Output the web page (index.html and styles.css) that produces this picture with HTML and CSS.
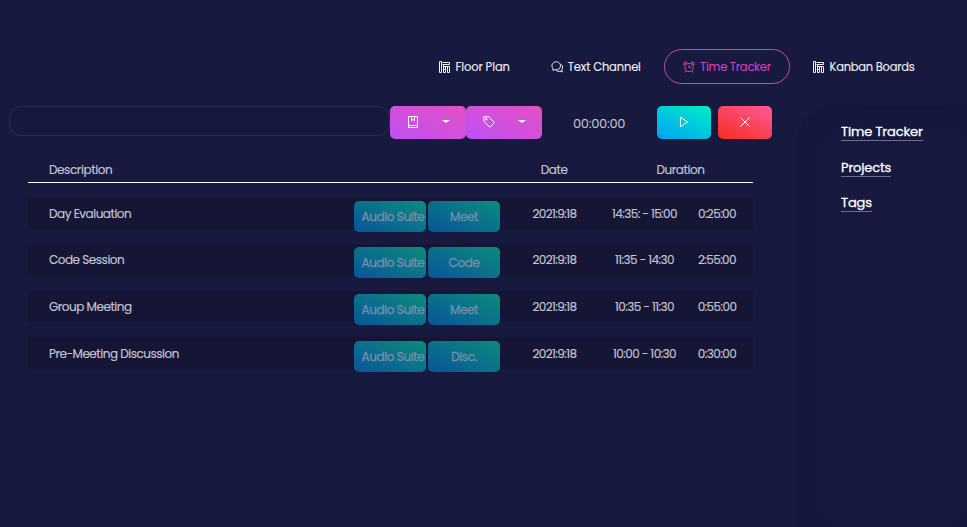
FILE: index.html
```html
<!DOCTYPE html>
<html lang="en">
<head>
<meta charset="utf-8">
<title>Time Tracker</title>
<link rel="stylesheet" href="styles.css">
</head>
<body>
<svg class="defs" aria-hidden="true">
  <symbol id="board" viewBox="0 0 12 12"><path d="M1.500 .500H3.500V11.500H1.500ZM4.500 1.500H11.500V3.500H4.500M5.500 4V11.500M6 5.500H11.500V11.500H9.500V5.500M7.500 5.500V8.500M5.500 8.500H7.500V11.500H5.500"/></symbol>
  <symbol id="chat" viewBox="0 0 12 12"><path d="M1.800 9.200 2 7.400C.3 5.500 .6 2.500 3.500 1.200C6.500 0 9.500 1.800 9.500 4.800C9.500 7.500 7 9 4.800 8.800ZM10 3.300C12 4.600 12 7 10.800 8.600L11.200 10.800 9 10.200C7.500 10.600 6 10.300 5.200 9.300"/></symbol>
  <symbol id="clock" viewBox="0 0 12 12"><circle cx="6" cy="6.500" r="4.100"/><path d="M6 4V6.700H8M3 10 1.500 11.500M9 10 10.500 11.500M.9 4C0 1.500 2 .2 4 1.300ZM11.100 4C12 1.500 10 .2 8 1.300Z"/></symbol>
  <symbol id="book" viewBox="0 0 12 12"><path d="M1.500 .500H10.500V11.500H1.500ZM1.500 9.500H10.500M4.500 .500V4.500L6 3.500 7.500 4.500V.500"/></symbol>
  <symbol id="tag" viewBox="0 0 12 12"><path d="M.8 .8H5.800L11.400 6.600 7 11.200 .8 5.300Z"/><circle cx="3.300" cy="3.200" r=".8"/></symbol>
  <symbol id="play" viewBox="0 0 12 12"><path d="M2.500 1.300V10.700L9.500 6Z"/></symbol>
  <symbol id="close" viewBox="0 0 12 12"><path d="M1.500 1.500 10.500 10.500M10.500 1.500 1.500 10.500"/></symbol>
</svg>
<nav class="nav">
  <a class="tab floor"><svg><use href="#board"/></svg><span>Floor Plan</span></a>
  <a class="tab text"><svg><use href="#chat"/></svg><span>Text Channel</span></a>
  <a class="tab active"><svg><use href="#clock"/></svg><span>Time Tracker</span></a>
  <a class="tab kanban"><svg><use href="#board"/></svg><span>Kanban Boards</span></a>
</nav>
<div class="layout">
  <main class="main">
    <div class="toolbar">
      <input class="entry" type="text" aria-label="Description">
      <button class="pick"><svg><use href="#book"/></svg><i class="caret"></i></button>
      <button class="pick"><svg><use href="#tag"/></svg><i class="caret"></i></button>
      <span class="timer">00:00:00</span>
      <button class="action start"><svg><use href="#play"/></svg></button>
      <button class="action stop"><svg><use href="#close"/></svg></button>
    </div>
    <div class="table">
      <div class="head"><span class="desc">Description</span><span class="date">Date</span><span class="dur">Duration</span></div>
      <div class="row"><span class="desc">Day Evaluation</span><span class="chip suite">Audio Suite</span><span class="chip">Meet</span><span class="date">2021:9:18</span><span class="range">14:35: - 15:00</span><span class="total">0:25:00</span></div>
      <div class="row"><span class="desc">Code Session</span><span class="chip suite">Audio Suite</span><span class="chip">Code</span><span class="date">2021:9:18</span><span class="range">11:35 - 14:30</span><span class="total">2:55:00</span></div>
      <div class="row"><span class="desc">Group Meeting</span><span class="chip suite">Audio Suite</span><span class="chip">Meet</span><span class="date">2021:9:18</span><span class="range">10:35 - 11:30</span><span class="total">0:55:00</span></div>
      <div class="row"><span class="desc">Pre-Meeting Discussion</span><span class="chip suite">Audio Suite</span><span class="chip">Disc.</span><span class="date">2021:9:18</span><span class="range">10:00 - 10:30</span><span class="total">0:30:00</span></div>
    </div>
  </main>
  <aside class="side">
    <a class="link">Time Tracker</a>
    <a class="link">Projects</a>
    <a class="link">Tags</a>
  </aside>
</div>
</body>
</html>
```
FILE: styles.css
```css
* { box-sizing: border-box; }
body {
  margin: 0;
  height: 527px;
  overflow: hidden;
  background: #17193f;
  color: #c5c5d3;
  font: 12px/18px Poppins, Inter, sans-serif;
  letter-spacing: -0.48px;
}
.defs { display: none; }
svg { width: 12px; height: 12px; flex: none; fill: none; stroke: currentColor; stroke-width: 1; }
.nav { display: flex; height: 106px; padding: 49px 0 22px 420px; color: #f2f2f7; font-size: 11.5px; letter-spacing: -0.25px; }
.tab { display: flex; align-items: center; height: 35px; padding-left: 18px; gap: 5px; white-space: nowrap; -webkit-text-stroke: 0.1px currentColor; }
.tab span { padding-top: 1px; }
.floor { width: 112px; padding-left: 18px; gap: 5.500px; letter-spacing: -0.1px; }
.text { width: 132px; padding-left: 18.8px; letter-spacing: -0.15px; }
.active { width: 126px; border: 1px solid #c649b8; border-radius: 18px; color: #d43fc0; }
.kanban { padding-left: 22px; gap: 5.500px; }
.layout { display: flex; height: 421px; }
.main { width: 797px; }
.toolbar { display: flex; height: 33px; padding-left: 9px; }
.entry { width: 381px; height: 30px; border: 1px solid #2c2d55; border-radius: 12px; background: transparent; padding: 0 12px; color: inherit; }
button { border: 0; border-radius: 5px; padding: 0; height: 33px; color: #fff; display: flex; align-items: center; }
.pick { width: 76px; padding: 0 0 1px 17px; gap: 23px; background: linear-gradient(25deg, #bd50f5, #e64fc4); }
.caret { border: solid transparent; border-width: 3px 4px 0; border-top-color: #fff; margin-top: -1px; }
.timer { width: 115px; padding: 9px 0 0 31px; font-size: 13px; letter-spacing: -0.3px; }
.action { width: 54px; justify-content: center; padding-bottom: 2px; }
.start { background: linear-gradient(25deg, #00a0f5, #00f0c4); }
.stop { margin-left: 7px; background: linear-gradient(25deg, #f52c20, #ff5b98); }
.table { width: 725px; margin: 21px 0 0 28px; }
.head { display: flex; height: 23px; padding: 1px 0 0 21px; border-bottom: 1px solid #fff; margin-bottom: 14.4px; letter-spacing: -0.4px; -webkit-text-stroke: 0.15px currentColor; }
.head .desc { width: 451px; }
.head .date { width: 106px; padding-left: 40.700px; }
.dur { width: 110px; text-align: center; padding-left: 39px; }
.row { display: flex; height: 31.5px; margin-bottom: 15.13px; padding-left: 21px; align-items: center; background: #151636; border-radius: 2px; -webkit-text-stroke: 0.15px currentColor; }
.row .desc { width: 305px; padding-top: 1px; }
.chip { width: 72px; height: 31px; margin: 6px 2px 0 0; border-radius: 5px; background: linear-gradient(25deg, #09549b, #0b8c7c); color: #748fab; line-height: 32px; text-align: center; white-space: nowrap; letter-spacing: -0.4px; -webkit-text-stroke: 0.3px currentColor; }
.suite { padding-left: 7.5px; text-align: left; }
.row .date { width: 105px; text-align: center; }
.range { width: 75px; text-align: center; }
.total { width: 70px; text-align: center; }
.row .date, .range, .total { padding-top: 1px; white-space: nowrap; letter-spacing: -0.58px; }
.side { flex: 1; display: flex; flex-direction: column; align-items: flex-start; padding: 17px 0 0 44px; border-radius: 36px 0 0 0; clip-path: inset(0 0 0 0); box-shadow: inset 10px 8px 24px #15173a; }
.link { height: 18px; margin-bottom: 17.5px; font-size: 13px; line-height: 18px; letter-spacing: -0.14px; color: #fff; border-bottom: 1px solid #6d6e8d; -webkit-text-stroke: 0.3px currentColor; }
```
